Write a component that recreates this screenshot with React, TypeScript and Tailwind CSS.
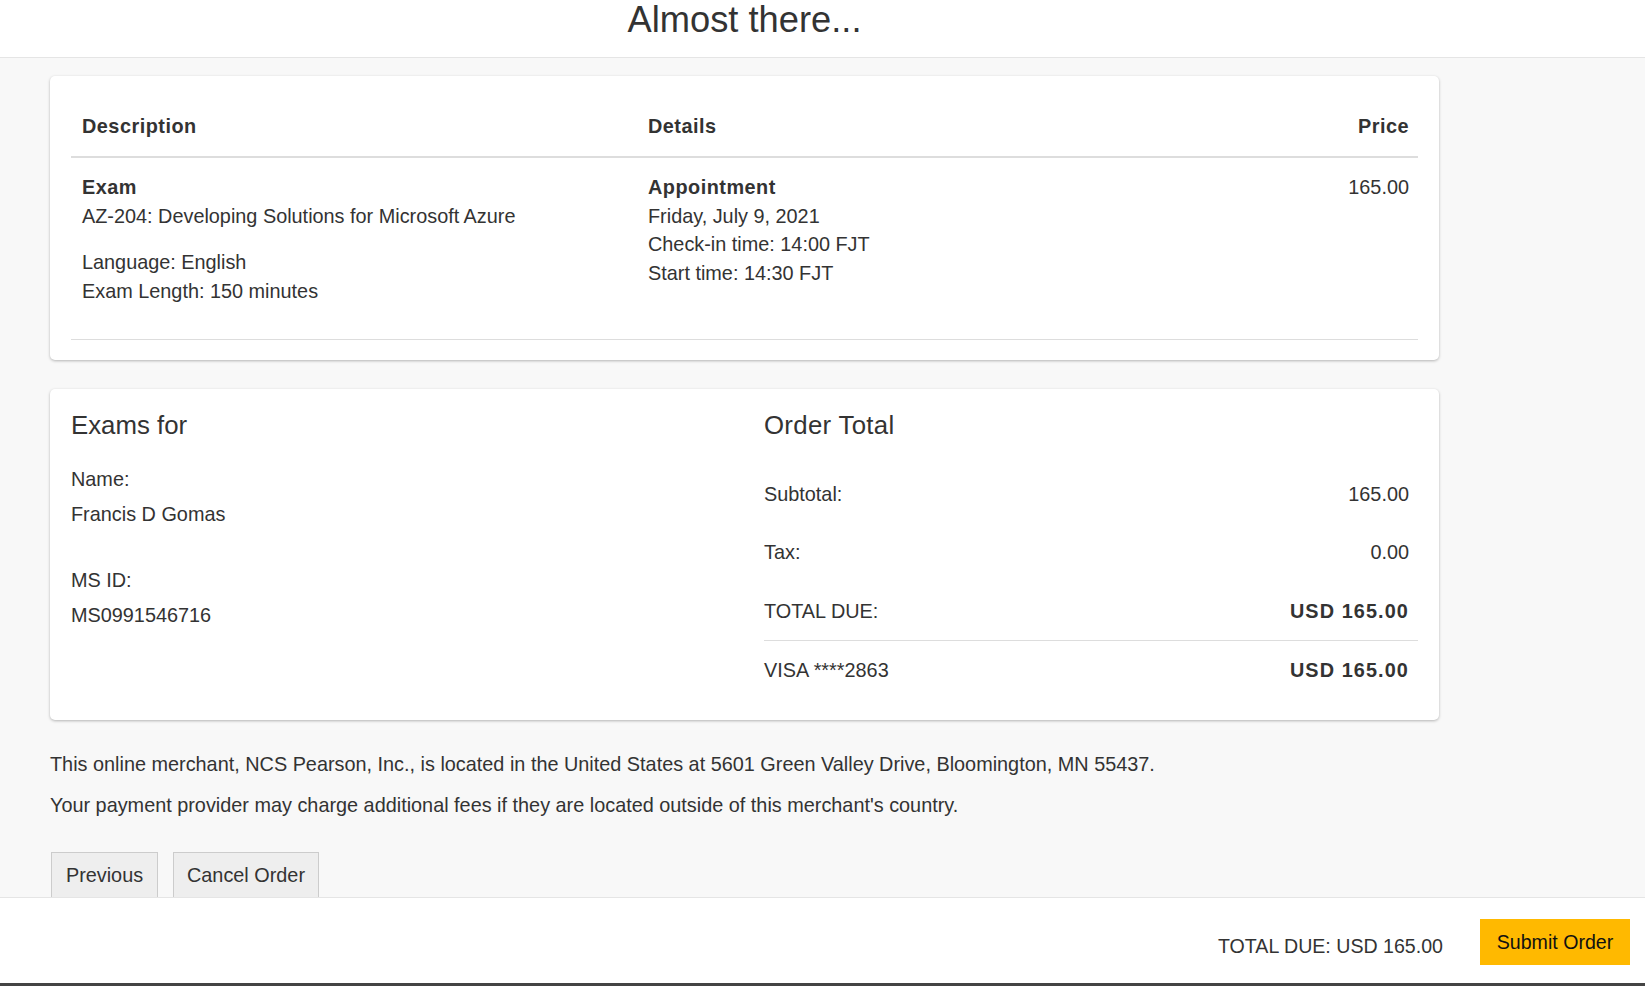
import React from "react";

const font = "font-['Liberation_Sans',Arial,sans-serif]";

function Card({ children, className = "" }: { children: React.ReactNode; className?: string }) {
  return (
    <div
      className={`ml-[50px] w-[1389px] rounded-[5px] bg-white shadow-[0_1px_3px_rgba(0,0,0,0.28)] ${className}`}
    >
      {children}
    </div>
  );
}

function TotalRow({ label, value, bold = false, border = false }: { label: string; value: string; bold?: boolean; border?: boolean }) {
  return (
    <div className={`flex justify-between py-[15px] pr-[9px] ${border ? "border-t border-[#dddddd]" : ""}`}>
      <span>{label}</span>
      <span className={bold ? "font-bold tracking-[1.1px]" : ""}>{value}</span>
    </div>
  );
}

export default function App() {
  return (
    <div className={`${font} flex h-[986px] flex-col overflow-hidden bg-[#f8f8f8] text-[19.85px] leading-[28.5px] text-[#333333]`}>
      {/* Header */}
      <header className="h-[58px] shrink-0 border-b border-[#e5e5e5] bg-white">
        <div className="ml-[50px] w-[1389px] text-center text-[36.3px] leading-[40px] text-[#333333]">Almost there...</div>
      </header>

      {/* Main */}
      <main className="min-h-0 flex-1 overflow-hidden">
        {/* Card 1 - order line */}
        <Card className="mt-[18px] px-[21px] pt-[21px] pb-[20px]">
          <div className="flex border-b-2 border-[#dddddd] pt-[15px] pb-[15px] pl-[11px] pr-[9px] font-bold tracking-[0.5px]">
            <div className="w-[566px]">Description</div>
            <div className="flex-1">Details</div>
            <div className="text-right">Price</div>
          </div>
          <div className="flex border-b border-[#dddddd] pt-[15.5px] pb-[34px] pl-[11px] pr-[9px]">
            <div className="w-[566px]">
              <div className="font-bold tracking-[0.5px]">Exam</div>
              <div>AZ-204: Developing Solutions for Microsoft Azure</div>
              <div className="mt-[18px]">Language: English</div>
              <div>Exam Length: 150 minutes</div>
            </div>
            <div className="flex-1">
              <div className="font-bold tracking-[0.5px]">Appointment</div>
              <div>Friday, July 9, 2021</div>
              <div>Check-in time: 14:00 FJT</div>
              <div>Start time: 14:30 FJT</div>
            </div>
            <div className="text-right">165.00</div>
          </div>
        </Card>

        {/* Card 2 - candidate & totals */}
        <Card className="mt-[29px] flex px-[21px] pt-[22px] pb-[20px]">
          <div className="w-[693px]">
            <h3 className="text-[25.8px] leading-[28px]">Exams for</h3>
            <div className="mt-[26px]">Name:</div>
            <div className="mt-[6.5px]">Francis D Gomas</div>
            <div className="mt-[37.5px]">MS ID:</div>
            <div className="mt-[6px]">MS0991546716</div>
          </div>
          <div className="flex-1">
            <h3 className="text-[25.8px] leading-[28px] tracking-[0.3px]">Order Total</h3>
            <div className="mt-[25.75px]">
              <TotalRow label="Subtotal:" value="165.00" />
              <TotalRow label="Tax:" value="0.00" />
              <TotalRow label="TOTAL DUE:" value="USD 165.00" bold />
              <TotalRow label="VISA ****2863" value="USD 165.00" bold border />
            </div>
          </div>
        </Card>

        {/* Merchant notes */}
        <div className="ml-[50px] mt-[30.5px]">
          <p>This online merchant, NCS Pearson, Inc., is located in the United States at 5601 Green Valley Drive, Bloomington, MN 55437.</p>
          <p className="mt-[12.5px]">Your payment provider may charge additional fees if they are located outside of this merchant's country.</p>
        </div>

        {/* Buttons */}
        <div className="ml-[51px] mt-[32px] flex gap-[15px]">
          <button className="h-[47px] w-[107px] border border-[#cccccc] bg-[#eeeeee] text-center text-[#333333]">Previous</button>
          <button className="h-[47px] w-[146px] border border-[#cccccc] bg-[#eeeeee] text-center text-[#333333]">Cancel Order</button>
        </div>
      </main>

      {/* Footer */}
      <footer className="flex h-[89px] shrink-0 items-start justify-end border-t border-b-[3px] border-t-[#e5e5e5] border-b-[#444444] bg-white pt-[21px] pr-[15px]">
        <div className="mt-[12.75px] text-[19.6px] text-[#333333]">TOTAL DUE: USD 165.00</div>
        <button className="ml-[37px] flex h-[46px] w-[150px] items-center justify-center bg-[#ffb900] text-[19.6px] text-[#111111]">Submit Order</button>
      </footer>
    </div>
  );
}
